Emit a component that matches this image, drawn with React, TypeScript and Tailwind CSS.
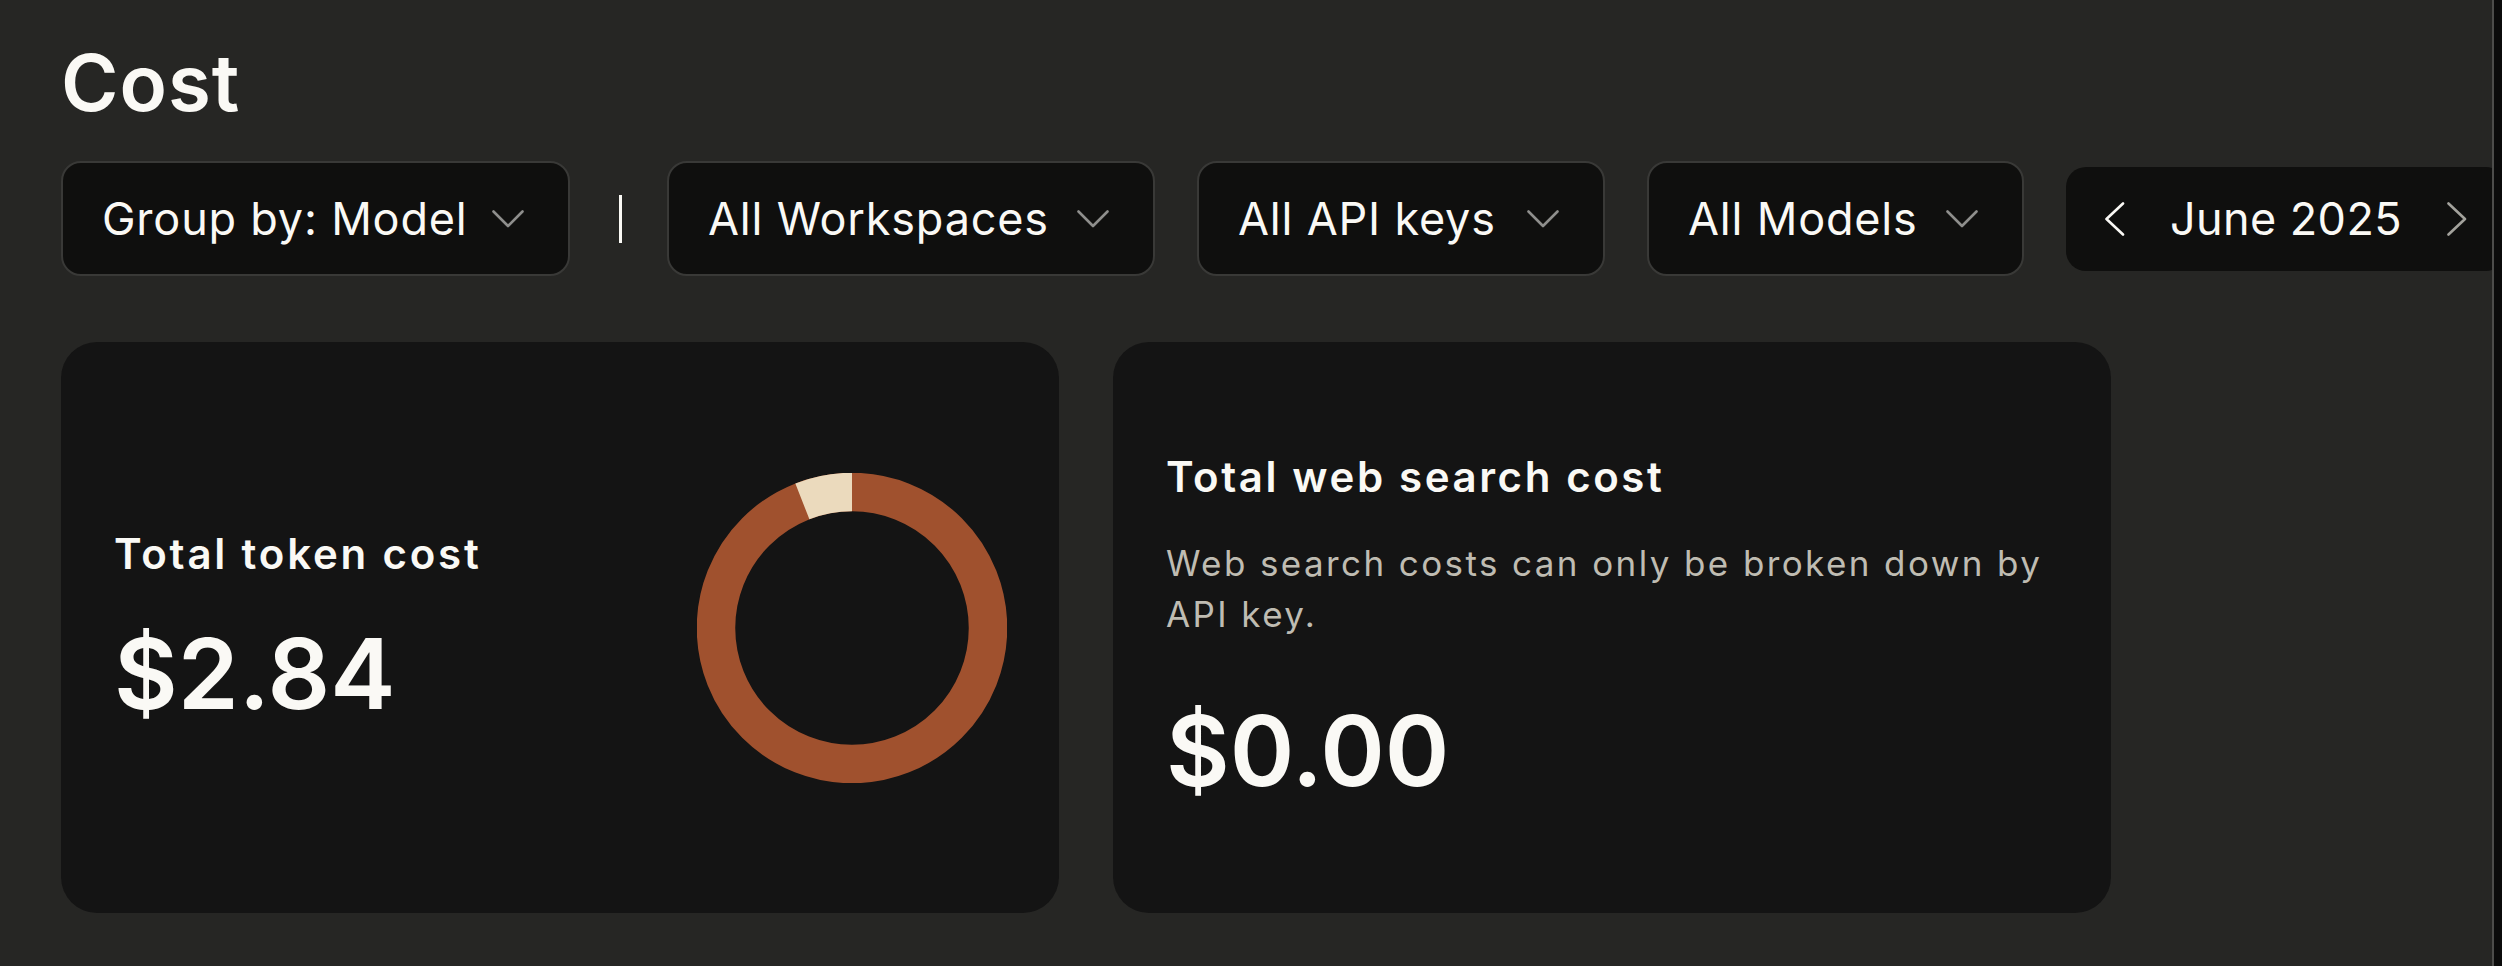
import { ReactNode } from "react";

const font = { fontFamily: "Inter, 'Noto Sans', sans-serif" };

function ChevronDown() {
  return (
    <svg width="32" height="18" viewBox="0 0 32 18" fill="none" aria-hidden>
      <polyline points="1.5,1.5 16,16 30.5,1.5" stroke="#8e8e8c" strokeWidth="2.6" strokeLinecap="round" strokeLinejoin="round" />
    </svg>
  );
}

function ChevronSide({ dir, color }: { dir: "left" | "right"; color: string }) {
  const pts = dir === "left" ? "18,1.5 1.5,17 18,32.5" : "1.5,1.5 18,17 1.5,32.5";
  return (
    <svg width="20" height="34" viewBox="0 0 20 34" fill="none" aria-hidden>
      <polyline points={pts} stroke={color} strokeWidth="2.6" strokeLinecap="round" strokeLinejoin="round" />
    </svg>
  );
}

function Select({ label, width }: { label: string; width: string }) {
  return (
    <button
      className={`flex h-[115px] shrink-0 items-center justify-between rounded-[20px] border-2 border-[#393937] bg-[#0f0f0e] pl-[39px] pr-[44px] text-[45px] tracking-[0.8px] text-[#faf9f5] ${width}`}
    >
      <span className="whitespace-nowrap leading-none">{label}</span>
      <ChevronDown />
    </button>
  );
}

function Card({ children }: { children: ReactNode }) {
  return (
    <div className="flex h-[571px] w-[998px] shrink-0 items-center rounded-[36px] bg-[#141414] pl-[53px] pr-[52px]">
      {children}
    </div>
  );
}

function Donut() {
  const c = 155;
  const r = 136;
  const a = (21.4 * Math.PI) / 180;
  const sx = c - r * Math.sin(a);
  const sy = c - r * Math.cos(a);
  return (
    <svg width="310" height="310" viewBox="0 0 310 310" aria-hidden>
      <circle cx={c} cy={c} r={r} fill="none" stroke="#a0512e" strokeWidth="38.5" />
      <path d={`M ${sx} ${sy} A ${r} ${r} 0 0 1 ${c} ${c - r}`} fill="none" stroke="#ebdabd" strokeWidth="38.5" />
    </svg>
  );
}

export default function App() {
  return (
    <div className="flex h-[966px] w-full bg-[#262624] text-[#faf9f5]" style={font}>
      <main className="min-w-0 flex-1 overflow-hidden pl-[61px] pt-[44px]">
        <h1 className="text-[78px] font-semibold leading-none tracking-[1px]">Cost</h1>

        <div className="mt-[39px] flex items-center gap-[42px]">
          <Select label="Group by: Model" width="w-[509px]" />
          <div className="ml-[7px] mr-[3px] h-[48px] w-[3px] shrink-0 bg-[#faf9f5]" />
          <Select label="All Workspaces" width="w-[488px]" />
          <Select label="All API keys" width="w-[408px]" />
          <Select label="All Models" width="w-[377px]" />
          <div className="flex h-[104px] w-[440px] shrink-0 items-center rounded-[20px] bg-[#0f0f0e] pl-[39px] pr-[39px] text-[45px] tracking-[0.4px]">
            <ChevronSide dir="left" color="#faf9f5" />
            <span className="ml-[45px] whitespace-nowrap leading-none">June 2025</span>
            <span className="ml-auto">
              <ChevronSide dir="right" color="#a3a29c" />
            </span>
          </div>
        </div>

        <div className="mt-[66px] flex gap-[54px]">
          <Card>
            <div className="flex w-full items-center justify-between">
              <div className="flex flex-col">
                <div className="text-[42px] font-semibold leading-none tracking-[2.8px]">Total token cost</div>
                <div className="mt-[50px] text-[98px] font-semibold leading-none">$2.84</div>
              </div>
              <Donut />
            </div>
          </Card>
          <Card>
            <div className="flex flex-col">
              <div className="text-[42px] font-semibold leading-none tracking-[2.6px]">Total web search cost</div>
              <p className="mt-[40px] w-[890px] text-[35px] leading-[51px] tracking-[2.4px] text-[#bfbcb2]">
                Web search costs can only be broken down by API key.
              </p>
              <div className="mt-[62px] text-[98px] font-semibold leading-none">$0.00</div>
            </div>
          </Card>
        </div>
      </main>
      <div className="w-[2px] shrink-0 bg-[#4d4d4b]" />
      <div className="w-[8px] shrink-0 bg-[#0b0b0b]" />
    </div>
  );
}
